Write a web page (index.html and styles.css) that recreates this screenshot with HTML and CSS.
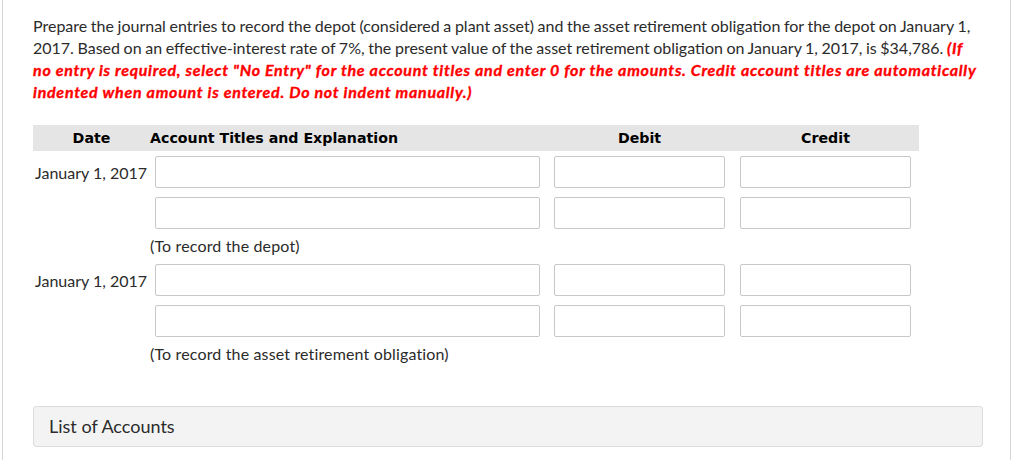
FILE: index.html
```html
<!DOCTYPE html>
<html>
<head>
<meta charset="utf-8">
<link rel="stylesheet" href="styles.css">
</head>
<body>
<div class="frame">
  <p class="prompt">Prepare the journal entries to record the depot (considered a plant asset) and the asset retirement obligation for the depot on January 1,<br>2017. Based on an effective-interest rate of 7%, the present value of the asset retirement obligation on January 1, 2017, is $34,786. <span class="warn">(If<br>no entry is required, select "No Entry" for the account titles and enter 0 for the amounts. Credit account titles are automatically<br>indented when amount is entered. Do not indent manually.)</span></p>

  <div class="journal">
    <div class="head">
      <div class="h-date">Date</div>
      <div class="h-acct">Account Titles and Explanation</div>
      <div class="h-num">Debit</div>
      <div class="h-num">Credit</div>
    </div>

    <div class="row">
      <div class="date">January 1, 2017</div>
      <div class="acct"><span class="field"></span></div>
      <div class="num"><span class="field"></span></div>
      <div class="num cr"><span class="field"></span></div>
    </div>
    <div class="row">
      <div class="date"></div>
      <div class="acct"><span class="field"></span></div>
      <div class="num"><span class="field"></span></div>
      <div class="num cr"><span class="field"></span></div>
    </div>
    <div class="expl">(To record the depot)</div>

    <div class="row">
      <div class="date">January 1, 2017</div>
      <div class="acct"><span class="field"></span></div>
      <div class="num"><span class="field"></span></div>
      <div class="num cr"><span class="field"></span></div>
    </div>
    <div class="row">
      <div class="date"></div>
      <div class="acct"><span class="field"></span></div>
      <div class="num"><span class="field"></span></div>
      <div class="num cr"><span class="field"></span></div>
    </div>
    <div class="expl">(To record the asset retirement obligation)</div>
  </div>

  <div class="accounts">List of Accounts</div>
</div>
</body>
</html>
```

FILE: styles.css
```css
html, body {
  margin: 0;
  padding: 0;
  background: #fff;
}
body {
  font-family: Lato, "Open Sans", sans-serif;
  color: #2b2b2b;
}
.frame {
  margin-left: 2px;
  width: 1009px;
  height: 460px;
  border-left: 1px solid #d6d6d6;
  border-right: 1px solid #d6d6d6;
  box-sizing: border-box;
  padding: 15px 0 0 30px;
}
.prompt {
  margin: 0;
  font-size: 16px;
  line-height: 22px;
  white-space: nowrap;
  word-spacing: -0.5px;
}
.warn {
  color: #ff0000;
  font-weight: bold;
  font-style: italic;
  word-spacing: 0;
  letter-spacing: 0.72px;
  -webkit-text-stroke: 0.35px #ff0000;
}
.journal {
  margin-top: 22px;
  width: 886px;
}
.head {
  display: grid;
  grid-template-columns: 117px 397px 185px 187px;
  background: #e5e5e5;
  height: 26px;
  align-items: center;
  font-family: "DejaVu Sans", Verdana, sans-serif;
  font-weight: bold;
  font-size: 14.2px;
  color: #000;
}
.h-date { text-align: center; padding-left: 0; }
.h-num { text-align: center; }
.row {
  display: grid;
  grid-template-columns: 117px 397px 185px 187px;
  align-items: center;
  margin-top: 5px;
}
.row + .row { margin-top: 9px; }
.date {
  font-size: 16px;
  padding-left: 2px;
  white-space: nowrap;
}
.acct { padding: 0 7px 0 5px; }
.num { padding: 0 7px; }
.num.cr { padding: 0 8px; }
.field {
  display: block;
  height: 32px;
  box-sizing: border-box;
  border: 1px solid #c8c8c8;
  border-radius: 2px;
  background: #fff;
}
.expl {
  padding-left: 117px;
  font-size: 16px;
  line-height: 22px;
  letter-spacing: 0.15px;
  margin-top: 6px;
  margin-bottom: 7px;
}
.accounts {
  margin-top: 41px;
  width: 950px;
  height: 41px;
  box-sizing: border-box;
  background: #f3f3f3;
  border: 1px solid #dcdcdc;
  border-radius: 3px;
  padding-left: 15px;
  font-size: 18px;
  line-height: 39px;
  color: #2b2b2b;
}
```
